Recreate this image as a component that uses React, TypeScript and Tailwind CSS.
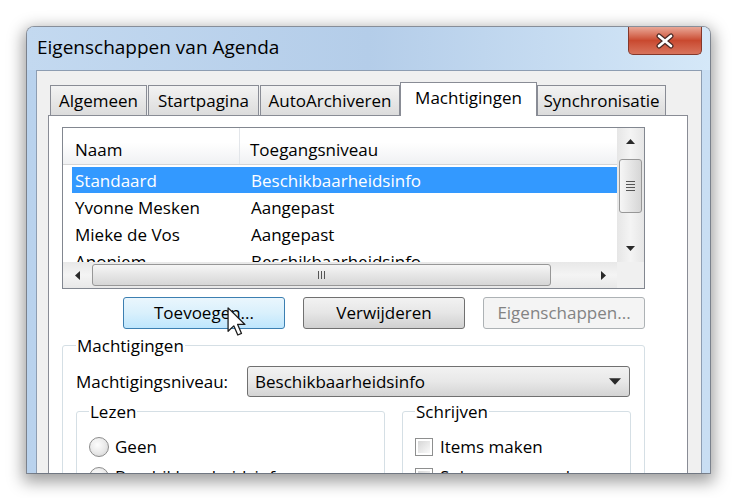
import React from "react";

type Dir = "up" | "down" | "left" | "right";

function Arrow({ dir, className }: { dir: Dir; className?: string }) {
  const pts = {
    up: "0,5 4.5,0 9,5",
    down: "0,0 9,0 4.5,5",
    left: "5,0 5,9 0,4.5",
    right: "0,0 0,9 5,4.5",
  }[dir];
  const vb = dir === "up" || dir === "down" ? "0 0 9 5" : "0 0 5 9";
  return (
    <svg viewBox={vb} className={className}>
      <polygon points={pts} fill="#2a2a2a" />
    </svg>
  );
}

const rows = [
  { name: "Standaard", level: "Beschikbaarheidsinfo", selected: true },
  { name: "Yvonne Mesken", level: "Aangepast" },
  { name: "Mieke de Vos", level: "Aangepast" },
  { name: "Anoniem", level: "Beschikbaarheidsinfo" },
];

function Radio({ label }: { label: string }) {
  return (
    <div className="flex h-[30px] items-center gap-[6px]">
      <div className="flex h-[20px] w-[20px] items-center justify-center rounded-full border border-[#8c8c8c] bg-[radial-gradient(circle_at_40%_35%,#ffffff,#d2d2d2)]">
        <div className="h-[14px] w-[14px] rounded-full bg-[radial-gradient(circle_at_40%_35%,#fdfdfd,#dedede)]" />
      </div>
      <span>{label}</span>
    </div>
  );
}

function Check({ label }: { label: string }) {
  return (
    <div className="flex h-[30px] items-center gap-[7px]">
      <div className="h-[18px] w-[18px] border border-[#8e8f8f] bg-white p-[2px]">
        <div className="h-full w-full bg-gradient-to-br from-[#d6d6d6] to-[#fafafa]" />
      </div>
      <span>{label}</span>
    </div>
  );
}

export default function App() {
  return (
    <div className="relative h-[498px] w-[737px] overflow-hidden bg-white pl-[27px] pt-[27px] font-['Open_Sans',sans-serif] text-[17px] text-black">
      {/* Window */}
      <div className="flex h-[446px] w-[683px] flex-col overflow-hidden rounded-t-[7px] bg-gradient-to-r from-[#b9d2ed] via-[#c4daf1] to-[#c9def3] shadow-[0_0_0_1px_rgba(40,55,80,0.45),0_5px_16px_4px_rgba(0,0,0,0.38)]">
        {/* Title bar */}
        <div className="flex h-[43px] shrink-0 items-start justify-between bg-gradient-to-r from-[#c3d9f0] via-[#b4cde9] to-[#d5e8f8]">
          <div className="pl-[10px] pt-[8px] text-[19px] leading-[24px]">Eigenschappen van Agenda</div>
          <div className="mr-[8px] flex h-[28px] w-[74px] items-center justify-center rounded-b-[5px] border border-t-0 border-[#84382b] bg-gradient-to-b from-[#e8a797] via-[#c9492f] to-[#d8735c]">
            <svg viewBox="0 0 20 16" className="h-[16px] w-[20px]">
              <path d="M4 3 L16 13 M16 3 L4 13" stroke="#4a2a26" strokeWidth="5" strokeLinecap="round" />
              <path d="M4 3 L16 13 M16 3 L4 13" stroke="#ffffff" strokeWidth="2.6" strokeLinecap="round" />
            </svg>
          </div>
        </div>

        {/* Client area */}
        <div className="ml-[9px] mr-[8px] flex flex-1 flex-col border border-b-0 border-[#8d9db2] bg-[#f0f0f0] pt-[11px]">
          {/* Tabs */}
          <div className="ml-[13px] flex h-[33px] items-end">
            <div className="flex h-[30px] w-[97px] items-center justify-center border border-b-0 border-[#898c95] bg-gradient-to-b from-[#f3f3f3] to-[#dcdcdc]">Algemeen</div>
            <div className="ml-[1px] flex h-[30px] w-[111px] items-center justify-center border border-b-0 border-[#898c95] bg-gradient-to-b from-[#f3f3f3] to-[#dcdcdc]">Startpagina</div>
            <div className="ml-[1px] flex h-[30px] w-[140px] items-center justify-center border border-b-0 border-[#898c95] bg-gradient-to-b from-[#f3f3f3] to-[#dcdcdc]">AutoArchiveren</div>
            <div className="relative z-10 -mb-px flex h-[34px] w-[137px] items-center justify-center border border-b-0 border-[#898c95] bg-white pb-[3px]">Machtigingen</div>
            <div className="flex h-[30px] w-[129px] items-center justify-center border border-b-0 border-[#898c95] bg-gradient-to-b from-[#f3f3f3] to-[#dcdcdc]">Synchronisatie</div>
          </div>

          {/* Tab panel */}
          <div className="ml-[11px] w-[640px] flex-1 border border-b-0 border-[#898c95] bg-white pl-[13px] pt-[11px]">
            {/* List view */}
            <div className="flex h-[162px] w-[583px] flex-col border border-[#828790]">
              <div className="flex h-[134px]">
                <div className="w-[554px] overflow-hidden">
                  <div className="flex h-[37px] border-b border-[#d5d5d5] bg-gradient-to-b from-white from-40% to-[#f0f1f3]">
                    <div className="flex w-[177px] items-center border-r border-[#e3e6ea] pl-[12px] pt-[7px]">Naam</div>
                    <div className="flex items-center pl-[10px] pt-[7px]">Toegangsniveau</div>
                  </div>
                  <div className="mt-[2px]">
                    {rows.map((r) => (
                      <div key={r.name} className="h-[27px] pl-[9px]">
                        <div className={`flex h-[26px] items-center pt-px ${r.selected ? "bg-[#3399ff] text-white" : ""}`}>
                          <div className="w-[179px] pl-[3px]">{r.name}</div>
                          <div>{r.level}</div>
                        </div>
                      </div>
                    ))}
                  </div>
                </div>
                {/* vertical scrollbar */}
                <div className="flex w-[27px] flex-col items-center bg-gradient-to-r from-[#e6e6e6] via-[#f4f4f4] to-[#e6e6e6]">
                  <div className="flex h-[27px] items-center justify-center">
                    <Arrow dir="up" className="h-[5px] w-[9px]" />
                  </div>
                  <div className="mt-[4px] flex h-[54px] w-[23px] flex-col items-center justify-center gap-[2px] rounded-[3px] border border-[#979797] bg-gradient-to-r from-[#f6f6f6] to-[#d6d6d6]">
                    <div className="h-px w-[9px] bg-[#555]" />
                    <div className="h-px w-[9px] bg-[#555]" />
                    <div className="h-px w-[9px] bg-[#555]" />
                    <div className="h-px w-[9px] bg-[#555]" />
                  </div>
                  <div className="flex-1" />
                  <div className="flex h-[27px] items-center justify-center">
                    <Arrow dir="down" className="h-[5px] w-[9px]" />
                  </div>
                </div>
              </div>
              {/* horizontal scrollbar */}
              <div className="flex h-[26px]">
                <div className="flex w-[554px] items-center bg-gradient-to-b from-[#e8e8e8] via-[#f4f4f4] to-[#e8e8e8]">
                  <div className="flex w-[29px] justify-center">
                    <Arrow dir="left" className="h-[9px] w-[5px]" />
                  </div>
                  <div className="flex h-[22px] w-[459px] items-center justify-center gap-[2px] rounded-[3px] border border-[#979797] bg-gradient-to-b from-[#f6f6f6] to-[#d6d6d6]">
                    <div className="h-[8px] w-px bg-[#555]" />
                    <div className="h-[8px] w-px bg-[#555]" />
                    <div className="h-[8px] w-px bg-[#555]" />
                  </div>
                  <div className="flex-1" />
                  <div className="flex w-[27px] justify-center">
                    <Arrow dir="right" className="h-[9px] w-[5px]" />
                  </div>
                </div>
                <div className="w-[27px] bg-[#f0f0f0]" />
              </div>
            </div>

            {/* Buttons */}
            <div className="mt-[8px] flex w-[583px] justify-end gap-[18px]">
              <div className="flex h-[32px] w-[162px] items-center justify-center rounded-[3px] border border-[#3c7fb1] bg-gradient-to-b from-[#eaf6fd] via-[#d9f0fc] to-[#bee6fd]">Toevoegen...</div>
              <div className="flex h-[32px] w-[162px] items-center justify-center rounded-[3px] border border-[#707070] bg-gradient-to-b from-[#f2f2f2] via-[#e6e6e6] to-[#d0d0d0]">Verwijderen</div>
              <div className="flex h-[32px] w-[162px] items-center justify-center rounded-[3px] border border-[#adb2b5] bg-[#f4f4f4] text-[#838383]">Eigenschappen...</div>
            </div>

            {/* Machtigingen group */}
            <fieldset className="mt-[5px] w-[582px] rounded-[3px] border border-[#d5dfe5] px-[13px]">
              <legend className="px-[1px] leading-[23px]">Machtigingen</legend>
              <div className="mt-[9px] flex items-center">
                <div className="w-[171px]">Machtigingsniveau:</div>
                <div className="flex h-[31px] w-[383px] items-center justify-between rounded-[3px] border border-[#707070] bg-gradient-to-b from-[#f2f2f2] via-[#e8e8e8] to-[#d4d4d4] pl-[7px] pr-[8px]">
                  <span>Beschikbaarheidsinfo</span>
                  <Arrow dir="down" className="h-[7px] w-[12px]" />
                </div>
              </div>
              <div className="mt-[3px] flex gap-[17px]">
                <fieldset className="w-[309px] rounded-[3px] border border-[#d5dfe5] pl-[12px]">
                  <legend className="px-[1px] leading-[23px]">Lezen</legend>
                  <div className="mt-[9px]">
                    <Radio label="Geen" />
                    <Radio label="Beschikbaarheidsinfo" />
                  </div>
                </fieldset>
                <fieldset className="w-[229px] rounded-[3px] border border-[#d5dfe5] pl-[12px]">
                  <legend className="px-[1px] leading-[23px]">Schrijven</legend>
                  <div className="mt-[9px]">
                    <Check label="Items maken" />
                    <Check label="Submappen maken" />
                  </div>
                </fieldset>
              </div>
            </fieldset>
          </div>
        </div>
      </div>

      {/* Mouse cursor */}
      <svg viewBox="0 0 13 21" className="absolute left-[227px] top-[307px] h-[30px] w-[19px]">
        <path d="M0.6 0.6 L0.6 17 L4.6 13.2 L7.4 19.6 L10 18.5 L7.3 12.2 L12.4 12.2 Z" fill="#ffffff" stroke="#1c1c1c" strokeWidth="0.9" strokeLinejoin="round" />
      </svg>
    </div>
  );
}
